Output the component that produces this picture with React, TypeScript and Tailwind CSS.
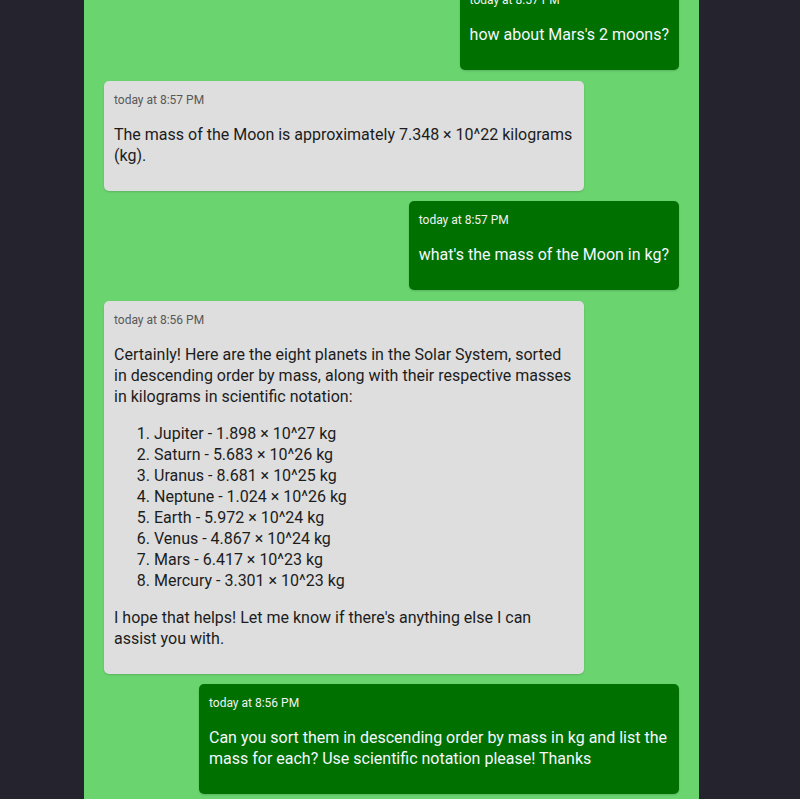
type Message = {
  fromUser: boolean;
  time: string;
  body: React.ReactNode;
};

const planets = [
  'Jupiter - 1.898 × 10^27 kg',
  'Saturn - 5.683 × 10^26 kg',
  'Uranus - 8.681 × 10^25 kg',
  'Neptune - 1.024 × 10^26 kg',
  'Earth - 5.972 × 10^24 kg',
  'Venus - 4.867 × 10^24 kg',
  'Mars - 6.417 × 10^23 kg',
  'Mercury - 3.301 × 10^23 kg',
];

const messages: Message[] = [
  {
    fromUser: true,
    time: 'today at 8:57 PM',
    body: <p className="my-4">how about Mars's 2 moons?</p>,
  },
  {
    fromUser: false,
    time: 'today at 8:57 PM',
    body: <p className="my-4">The mass of the Moon is approximately 7.348 × 10^22 kilograms (kg).</p>,
  },
  {
    fromUser: true,
    time: 'today at 8:57 PM',
    body: <p className="my-4">what's the mass of the Moon in kg?</p>,
  },
  {
    fromUser: false,
    time: 'today at 8:56 PM',
    body: (
      <>
        <p className="my-4">
          Certainly! Here are the eight planets in the Solar System, sorted in descending order by mass, along with
          their respective masses in kilograms in scientific notation:
        </p>
        <ol className="my-4 list-decimal pl-10">
          {planets.map((p) => (
            <li key={p}>{p}</li>
          ))}
        </ol>
        <p className="my-4">I hope that helps! Let me know if there's anything else I can assist you with.</p>
      </>
    ),
  },
  {
    fromUser: true,
    time: 'today at 8:56 PM',
    body: (
      <p className="my-4">
        Can you sort them in descending order by mass in kg and list the mass for each? Use scientific notation
        please! Thanks
      </p>
    ),
  },
];

function Bubble({ m }: { m: Message }) {
  return (
    <div
      className={`w-fit max-w-[480px] rounded-[5px] px-[10px] pt-[11px] pb-[9px] shadow-[0_1px_2px_rgba(0,0,0,0.15)] ${
        m.fromUser ? 'self-end bg-[#007000] text-[#f4f7ff]' : 'self-start bg-[#dedede] text-[#1c1c1c]'
      }`}
    >
      <div className={`text-[12px] leading-[16px] ${m.fromUser ? 'text-[#f2f2f2]' : 'text-[#585858]'}`}>{m.time}</div>
      <div className="text-[16px] leading-[21px]">{m.body}</div>
    </div>
  );
}

export default function App() {
  return (
    <div
      className="flex h-[799px] justify-center overflow-hidden bg-[#25242e] pr-[17px]"
      style={{ fontFamily: 'Roboto, sans-serif' }}
    >
      <div className="flex h-full w-[615px] flex-col justify-end gap-[10.5px] bg-[#6ad46f] px-5 pb-[5px]">
        {messages.map((m, i) => (
          <Bubble key={i} m={m} />
        ))}
      </div>
    </div>
  );
}
